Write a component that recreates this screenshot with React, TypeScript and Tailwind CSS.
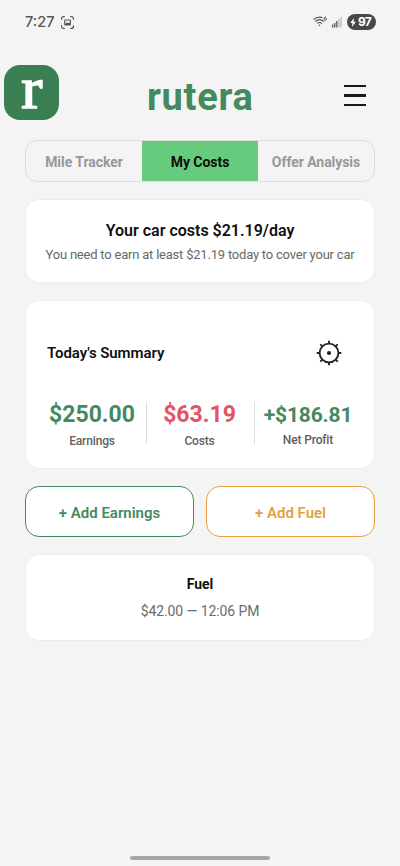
import type { ReactNode } from "react";
import { clsx } from "clsx";

const tabs = ["Mile Tracker", "My Costs", "Offer Analysis"];

function StatusBar() {
  return (
    <div className="flex h-11 items-center pl-[25px] pr-[24px] text-[#565656]">
      <span className="w-[29px] whitespace-nowrap font-[Inter] text-[14.5px] font-medium leading-none">7:27</span>
      <svg className="ml-[7px]" width="13" height="13" viewBox="0 0 13 13" fill="none" stroke="currentColor" strokeWidth="1.2">
        <path d="M.6 3.8V2.6a2 2 0 0 1 2-2h1.2M9.2.6h1.2a2 2 0 0 1 2 2v1.2M12.4 9.2v1.2a2 2 0 0 1-2 2H9.2M3.8 12.4H2.6a2 2 0 0 1-2-2V9.2" />
        <rect x="3.7" y="4" width="5.7" height="5" rx=".7" />
        <path d="M4 8.3 6 6.3l1.2 1 1.1-.8 1 1.2V9H4z" fill="currentColor" stroke="none" />
      </svg>

      <div className="ml-auto flex items-center">
        <svg className="-mt-[2px]" width="15" height="11" viewBox="0 0 15 11" fill="none" stroke="currentColor" strokeWidth="1.1">
          <path d="M.6 3.6C3.3 1.1 6.5.7 9.4 1.6" />
          <path d="M2.2 5.5c2.6-2.2 6-2.2 8.6 0" />
          <path d="M4.2 7.5c1.4-1.2 3.2-1.2 4.6 0" />
          <circle cx="6.5" cy="9.2" r=".8" fill="currentColor" stroke="none" />
          <path d="M13 .7c-1 .1-1.9 1-1.9 2.3" strokeWidth=".9" />
          <circle cx="12.3" cy="3.2" r="1.2" strokeWidth=".9" />
        </svg>
        <svg className="ml-[4px]" width="10" height="11" viewBox="0 0 10 11" fill="currentColor">
          <rect x="0" y="7.5" width="1.3" height="3" />
          <rect x="2.1" y="6" width="1.3" height="4.5" />
          <rect x="4.2" y="4" width="1.3" height="6.5" />
          <rect x="6.3" y="2" width="1.3" height="8.5" opacity=".35" />
          <rect x="8.4" y="0" width="1.3" height="10.5" opacity=".35" />
        </svg>
        <div className="ml-[5px] flex h-[16px] w-[29px] items-center rounded-full bg-[#484848] pl-[3px] text-white">
          <svg width="6" height="9" viewBox="0 0 6 9" fill="currentColor">
            <path d="M4 0 .2 5h2.3L2 9l3.8-5.2H3.5z" />
          </svg>
          <span className="ml-[2px] font-[Inter] text-[12px] font-bold leading-none tracking-[-0.7px]">97</span>
        </div>
      </div>
    </div>
  );
}

function Header() {
  return (
    <header className="mt-[21px] flex h-[55px] items-start pl-[4px] pr-[34px]">
      <div className="flex size-[55px] justify-center rounded-[16px] bg-[#3a7f52]">
        <span className="scale-x-108 font-['Liberation_Serif',serif] text-[59px] leading-[47px] text-white [-webkit-text-stroke:1.5px_white]">r</span>
      </div>
      <h1 className="ml-[88px] mt-[10px] text-[38px] font-bold leading-[44px] tracking-[0.7px] text-[#448a5e]">rutera</h1>
      <button className="ml-auto mt-[20px] flex w-[22px] flex-col gap-[7px]" aria-label="Menu">
        <span className="h-[2.4px] w-full bg-[#1a1a1a]" />
        <span className="h-[2.4px] w-full bg-[#1a1a1a]" />
        <span className="h-[2.4px] w-full bg-[#1a1a1a]" />
      </button>
    </header>
  );
}

function Card({ className, children }: { className?: string; children: ReactNode }) {
  return (
    <section className={clsx("rounded-[14px] border border-[#ededed] bg-white", className)}>
      {children}
    </section>
  );
}

function SettingsIcon() {
  return (
    <svg width="26" height="26" viewBox="0 0 26 26" fill="none" stroke="#222" strokeWidth="1.9">
      <circle cx="13" cy="13" r="9.4" />
      <circle cx="13" cy="13" r="2.1" fill="#222" stroke="none" />
      <path d="M13 .7v3M13 22.3v3M.7 13h3M22.3 13h3M4.3 4.3l2.1 2.1M19.6 19.6l2.1 2.1M4.3 21.7l2.1-2.1M19.6 6.4l2.1-2.1" />
    </svg>
  );
}

export default function App() {
  return (
    <div className="flex h-[866px] w-[400px] flex-col bg-[#f4f4f4] font-[Roboto,sans-serif]">
      <StatusBar />
      <Header />

      <main className="flex flex-col px-[25px] pt-5">
        <nav className="flex h-[42px] overflow-hidden rounded-[12px] border border-[#dedede]">
          {tabs.map((tab) => (
            <button
              key={tab}
              className={clsx(
                "flex-1 whitespace-nowrap pt-[2px] text-[14px] font-bold tracking-[-0.05px]",
                tab === "My Costs" ? "bg-[#66cb7d] text-[#0c0c0c]" : "text-[#989898]"
              )}
            >
              {tab}
            </button>
          ))}
        </nav>

        <Card className="mt-[17px] h-[84px] pt-[21px] text-center">
          <h2 className="text-[16px] font-semibold leading-[20px] text-[#111]">Your car costs $21.19/day</h2>
          <p className="mt-[5px] text-[13px] leading-[18px] tracking-[-0.21px] text-[#686868]">
            You need to earn at least $21.19 today to cover your car
          </p>
        </Card>

        <Card className="mt-[17px] h-[169px] px-[12px] pt-[39px]">
          <div className="flex items-center justify-between pl-[9px] pr-[20px]">
            <h2 className="text-[15px] font-semibold tracking-[-0.07px] text-[#111]">Today's Summary</h2>
            <SettingsIcon />
          </div>
          <div className="mt-[36px] flex h-[42px] text-center text-[12px] font-medium text-[#606060]">
            <div className="w-[108px]">
              <div className="text-[23px] font-bold leading-[26px] text-[#448a5e]">$250.00</div>
              <div className="mt-[5px] leading-[16px] tracking-[-0.15px]">Earnings</div>
            </div>
            <div className="w-[108px] border-l border-[#dedede] pr-[2px]">
              <div className="text-[23px] font-bold leading-[26px] text-[#e35560]">$63.19</div>
              <div className="mt-[5px] leading-[16px] tracking-[-0.15px]">Costs</div>
            </div>
            <div className="w-[108px] border-l border-[#dedede] pr-px">
              <div className="text-[21px] font-bold leading-[26px] tracking-[-0.15px] text-[#448a5e]">+$186.81</div>
              <div className="mt-[4px] leading-[16px] tracking-[-0.15px]">Net Profit</div>
            </div>
          </div>
        </Card>

        <div className="mt-[17px] grid grid-cols-2 gap-[12px] text-[15px] font-semibold">
          <button className="h-[51px] rounded-[14px] border border-[#448a5e] bg-white pt-[3px] text-[#448a5e]">+ Add Earnings</button>
          <button className="h-[51px] rounded-[14px] border border-[#e5a044] bg-white pt-[3px] text-[#e5a044]">+ Add Fuel</button>
        </div>

        <Card className="mt-[17px] h-[87px] pt-[20px] text-center">
          <h2 className="text-[14px] font-bold leading-[18px] text-[#111]">Fuel</h2>
          <p className="mt-[8px] text-[14px] leading-[20px] tracking-[-0.1px] text-[#6c6c6c]">$42.00 — 12:06 PM</p>
        </Card>
      </main>

      <div className="mx-auto mb-[6px] mt-auto h-[4px] w-[140px] rounded-full bg-[#a5a5a5]" />
    </div>
  );
}
